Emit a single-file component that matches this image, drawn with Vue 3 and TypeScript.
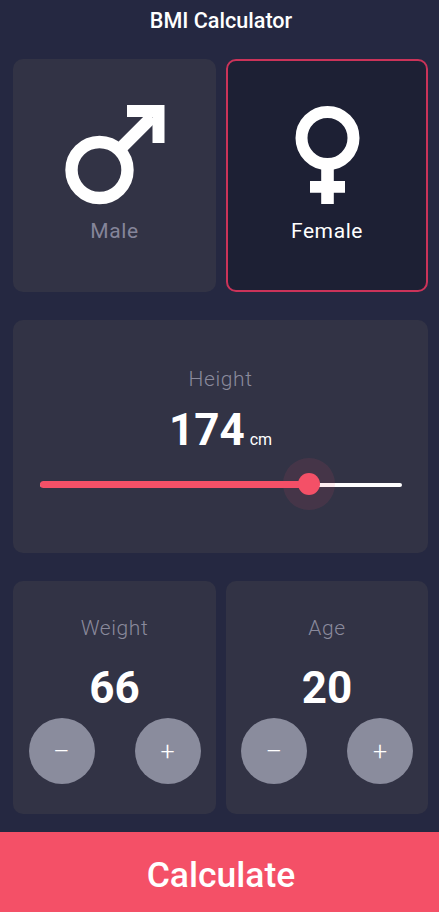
<script setup lang="ts">
interface Counter { label: string; value: number }
const counters: Counter[] = [
  { label: 'Weight', value: 66 },
  { label: 'Age', value: 20 },
]
</script>

<template>
  <div class="page">
    <header class="title">BMI Calculator</header>
    <main class="content">
      <section class="row">
        <div class="card gender">
          <svg class="icon" viewBox="0 0 110 110" width="110" height="110" aria-hidden="true">
            <circle cx="39.500" cy="70" r="28" fill="none" stroke="#fff" stroke-width="12.400" />
            <path d="M57 52 L92 17" stroke="#fff" stroke-width="12.400" fill="none" />
            <path d="M67 5 H104.500 V43 H92.500 V17 H67 Z" fill="#fff" />
          </svg>
          <span class="gender-label">Male</span>
        </div>
        <div class="card gender selected">
          <svg class="icon" viewBox="0 0 110 110" width="110" height="110" aria-hidden="true">
            <circle cx="55.500" cy="38" r="26" fill="none" stroke="#fff" stroke-width="12" />
            <path d="M49.200 68 H61.800 V81 H73 V92.700 H61.800 V104 H49.200 V92.700 H38 V81 H49.200 Z" fill="#fff" />
          </svg>
          <span class="gender-label on">Female</span>
        </div>
      </section>

      <section class="card height">
        <span class="label">Height</span>
        <div class="reading">
          <span class="big">174</span>
          <span class="unit">cm</span>
        </div>
        <div class="slider">
          <div class="track"></div>
          <div class="fill"></div>
          <div class="halo"></div>
          <div class="thumb"></div>
        </div>
      </section>

      <section class="row">
        <div v-for="c in counters" :key="c.label" class="card counter">
          <span class="label">{{ c.label }}</span>
          <span class="big count">{{ c.value }}</span>
          <div class="buttons">
            <button class="round" type="button">–</button>
            <button class="round" type="button">+</button>
          </div>
        </div>
      </section>
    </main>
    <button class="calc" type="button">Calculate</button>
  </div>
</template>

<style>
html, body { margin: 0; background: #252841; }
</style>

<style scoped>
.page {
  width: 439px;
  height: 912px;
  display: flex;
  flex-direction: column;
  background: #252841;
  color: #fff;
  font-family: Roboto, "Liberation Sans", sans-serif;
  overflow: hidden;
}
.title {
  height: 59px;
  box-sizing: border-box;
  padding: 9px 0 0 3px;
  line-height: 24px;
  text-align: center;
  font-size: 21.600px;
  font-weight: 500;
}
.content {
  flex: 1;
  display: flex;
  flex-direction: column;
  gap: 28px;
  padding: 0 11px 0 13px;
}
.row {
  display: grid;
  grid-template-columns: 203px 202px;
  gap: 10px;
}
.card {
  height: 233px;
  box-sizing: border-box;
  background: #323345;
  border-radius: 10px;
  display: flex;
  flex-direction: column;
  align-items: center;
}
.gender { padding-top: 41px; }
.gender .icon { display: block; }
.selected {
  background: #1d2034;
  border: 2px solid #cb3359;
  padding-top: 39px;
}
.gender-label {
  margin-top: 9px;
  font-size: 21px;
  line-height: 24px;
  letter-spacing: 0.6px;
  color: #85859a;
}
.gender-label.on { color: #fff; }
.label {
  font-size: 21px;
  font-weight: 300;
  line-height: 24px;
  letter-spacing: 0.6px;
  color: #8a8a9c;
}
.height { padding-top: 47px; }
.reading {
  display: flex;
  align-items: baseline;
  gap: 5px;
  margin-top: 14px;
  line-height: 50px;
}
.big {
  font-size: 44px;
  font-weight: 700;
  line-height: 50px;
}
.unit {
  font-size: 16px;
  font-weight: 400;
}
.slider {
  position: relative;
  width: 362px;
  height: 8px;
  margin-top: 16px;
}
.track {
  position: absolute;
  left: 0;
  right: 0;
  top: 1.500px;
  height: 4px;
  border-radius: 2px;
  background: #fff;
}
.fill {
  position: absolute;
  left: 0;
  top: 0;
  width: 270px;
  height: 7px;
  border-radius: 4px;
  background: #f45067;
}
.halo {
  position: absolute;
  left: 243px;
  top: -23px;
  width: 52px;
  height: 52px;
  border-radius: 50%;
  background: rgba(245, 80, 104, 0.1);
}
.thumb {
  position: absolute;
  left: 258px;
  top: -8px;
  width: 22px;
  height: 22px;
  border-radius: 50%;
  background: #f45067;
}
.counter { padding-top: 35px; }
.count { margin-top: 23px; }
.buttons {
  width: 172px;
  display: flex;
  justify-content: space-between;
  margin-top: 5px;
}
.round {
  width: 66px;
  height: 66px;
  padding: 0;
  border: 0;
  border-radius: 50%;
  background: #8a8c9d;
  color: #fff;
  font-family: Roboto, "Liberation Sans", sans-serif;
  font-size: 25px;
  font-weight: 300;
}
.calc {
  height: 80px;
  flex: none;
  border: 0;
  padding: 6px 0 0 3px;
  background: #f45067;
  color: #fff;
  font-family: Roboto, "Liberation Sans", sans-serif;
  font-size: 35.500px;
  font-weight: 500;
}
</style>
